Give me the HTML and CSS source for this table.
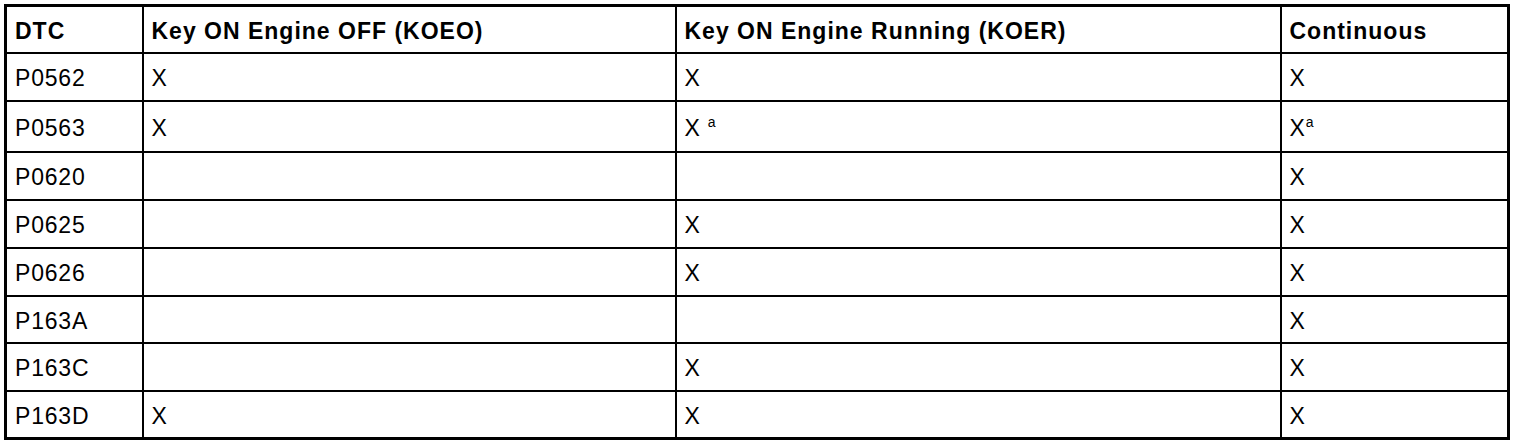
FILE: index.html
```html
<!DOCTYPE html>
<html>
<head>
<meta charset="utf-8">
<link rel="stylesheet" href="styles.css">
</head>
<body>
<div class="page">
<table class="dtc">
<colgroup>
<col class="c1"><col class="c2"><col class="c3"><col class="c4">
</colgroup>
<thead>
<tr><th>DTC</th><th>Key ON Engine OFF (KOEO)</th><th>Key ON Engine Running (KOER)</th><th>Continuous</th></tr>
</thead>
<tbody>
<tr class="h49"><td>P0562</td><td>X</td><td>X</td><td>X</td></tr>
<tr class="h51"><td>P0563</td><td>X</td><td>X <sup>a</sup></td><td>X<sup>a</sup></td></tr>
<tr><td>P0620</td><td></td><td></td><td>X</td></tr>
<tr><td>P0625</td><td></td><td>X</td><td>X</td></tr>
<tr><td>P0626</td><td></td><td>X</td><td>X</td></tr>
<tr class="h47"><td>P163A</td><td></td><td></td><td>X</td></tr>
<tr><td>P163C</td><td></td><td>X</td><td>X</td></tr>
<tr class="h47"><td>P163D</td><td>X</td><td>X</td><td>X</td></tr>
</tbody>
</table>
</div>
</body>
</html>
```
FILE: styles.css
```css
html, body {
  margin: 0;
  padding: 0;
  background: #fff;
}
.page {
  padding: 4px;
}
.dtc {
  border-collapse: collapse;
  table-layout: fixed;
  width: 1503px;
  border: 3px solid #000;
  font-family: "Liberation Sans", Arial, sans-serif;
  font-size: 23px;
  letter-spacing: 0.8px;
  color: #000;
}
.c1 { width: 137px; }
.c2 { width: 533px; }
.c3 { width: 605px; }
.c4 { width: 228px; }
.dtc th, .dtc td {
  border: 2px solid #000;
  padding: 2px 8px 0;
  text-align: left;
  vertical-align: middle;
  line-height: 24px;
}
.dtc th {
  font-weight: bold;
  height: 43px;
  letter-spacing: 1px;
}
.dtc td {
  height: 44px;
}
.dtc .h49 td { height: 44px; }
.dtc .h51 td { height: 47px; }
.dtc .h47 td { height: 43px; }
.dtc sup {
  font-size: 14px;
  letter-spacing: 0;
  vertical-align: 9px;
  line-height: 0;
}
```
